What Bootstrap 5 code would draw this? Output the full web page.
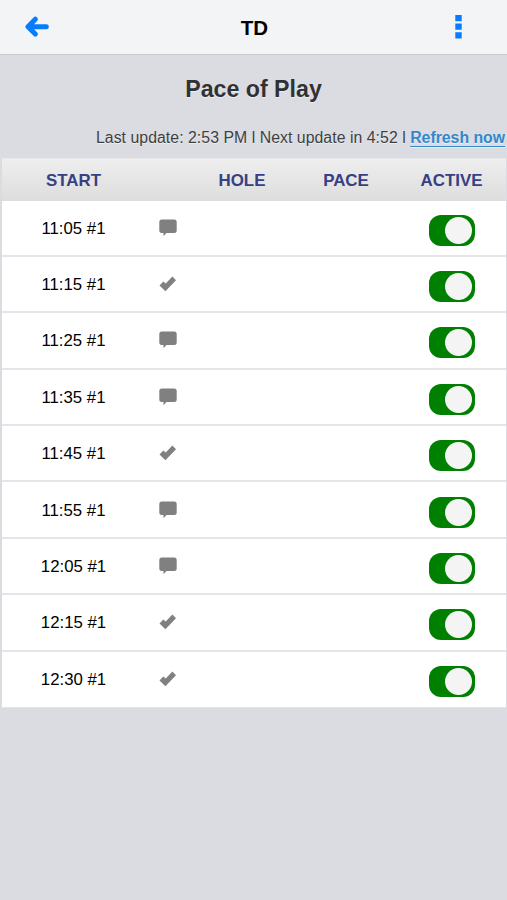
<!DOCTYPE html>
<html lang="en">
<head>
<meta charset="utf-8">
<meta name="viewport" content="width=device-width, initial-scale=1">
<title>Pace of Play</title>
<link href="https://cdn.jsdelivr.net/npm/bootstrap@5.3.0/dist/css/bootstrap.min.css" rel="stylesheet">
<style>
  body { background: #dbdce1; color: #000; font-family: "Liberation Sans", Arial, sans-serif; min-height: 100vh; overflow: hidden; }
  .topbar { height: 55px; background: #f2f4f6; border-bottom: 1px solid #c8cacf; padding: 0 35px 0 24px; }
  .topbar h1 { font-size: 20.5px; line-height: 55px; padding: 1px 0 0 13px; }
  .icon-btn { width: 26px; height: 54px; color: #087cff; line-height: 0; }
  .page-title { font-size: 23.2px; line-height: 28px; margin-top: 20px; color: #303135; text-shadow: 0 1px 0 #eeeeee; }
  .update-line { font-size: 15.8px; letter-spacing: .055px; line-height: 20px; margin-top: 25px; height: 30px; padding-right: 2px; color: #3e3f43; text-shadow: 0 1px 0 #eeeeee; }
  .update-line a { color: #3388cc; letter-spacing: 0; text-underline-offset: 3px; text-decoration-thickness: 1px; text-decoration-skip-ink: none; }
  .sheet { margin: 0 1px 0 2px; }
  .grid-row { display: grid; grid-template-columns: 143px 45px 104px 104px 107px; height: 56.4px; background: #fff; border-bottom: 2px solid #e4e5e8; font-size: 16.8px; }
  .grid-row > span:first-child { padding-top: 1px; }
  .grid-row:last-child { border-bottom-width: 1px; }
  .grid-head { height: 42.5px; color: #374083; background: linear-gradient(#eeeeee, #dddddd); border-top: 1px solid #e9e9ec; border-bottom: 0; }
  .grid-head > span { padding-top: 1px; font-size: 16.9px; }
  .toggle { width: 46px; height: 31px; border-radius: 12px; background: #008000; padding-right: 3px; margin-top: 5px; }
  .toggle span { width: 27px; height: 27px; background: #f4f4f4; }
  .status { color: #808080; line-height: 0; }
</style>
<script src="https://cdn.jsdelivr.net/npm/bootstrap@5.3.0/dist/js/bootstrap.bundle.min.js"></script>
</head>
<body>
<svg class="d-none" aria-hidden="true">
  <symbol id="comment" viewBox="0 0 18 18"><path fill="currentColor" d="M2.800 .5h12.400q2.500 0 2.500 2.500v8.500q0 2.500-2.500 2.500H7.500l-3 3.300V14H2.800q-2.500 0-2.500-2.500V3q0-2.500 2.500-2.500z"/></symbol>
  <symbol id="check" viewBox="0 0 18 18"><path fill="currentColor" d="M13.400 1.400 17 5.200 6.400 16.200 .5 10.500 4.300 6.500l2.400 2z"/></symbol>
</svg>

<header class="topbar d-flex justify-content-between align-items-center">
  <a class="icon-btn d-flex align-items-center" href="#" aria-label="Back">
    <svg width="26" height="22" viewBox="0 0 26 22" fill="none" stroke="currentColor" stroke-width="5" stroke-linecap="round" stroke-linejoin="round"><path d="M11.300 3.200 4 10.700l7.300 7.300M5 10.700h17.300"/><path fill="currentColor" stroke="none" d="M10 5.500v10.500L4 10.700z"/></svg>
  </a>
  <h1 class="fw-bold m-0">TD</h1>
  <a class="icon-btn d-flex align-items-center justify-content-center" href="#" aria-label="Menu">
    <svg width="7" height="24" viewBox="0 0 7 24" fill="currentColor"><path d="M.3 0h6.400v6.200H.3zM.3 8.600h6.400v6.200H.3zM.3 17.200h6.400v6.200H.3z"/></svg>
  </a>
</header>

<main>
  <h2 class="page-title fw-bold text-center mb-0">Pace of Play</h2>
  <p class="update-line text-end text-nowrap mb-0">Last update: 2:53 PM l Next update in 4:52 l <a class="fw-bold" href="#">Refresh now</a></p>
  <div class="sheet" id="sheet">
    <div class="grid-row grid-head fw-bold text-center align-items-center">
      <span>START</span><span></span><span>HOLE</span><span>PACE</span><span>ACTIVE</span>
    </div>
  </div>
</main>

<script>
  const rows = [
    ["11:05 #1", "comment"], ["11:15 #1", "check"], ["11:25 #1", "comment"],
    ["11:35 #1", "comment"], ["11:45 #1", "check"], ["11:55 #1", "comment"],
    ["12:05 #1", "comment"], ["12:15 #1", "check"], ["12:30 #1", "check"]
  ];
  document.getElementById("sheet").insertAdjacentHTML("beforeend", rows.map(([time, icon]) => `
    <div class="grid-row align-items-center text-center">
      <span>${time}</span>
      <span class="status"><svg width="18" height="18"><use href="#${icon}"/></svg></span>
      <span></span><span></span>
      <span class="toggle d-flex align-items-center justify-content-end mx-auto" role="switch" aria-checked="true"><span class="rounded-circle"></span></span>
    </div>`).join(""));
</script>
</body>
</html>
